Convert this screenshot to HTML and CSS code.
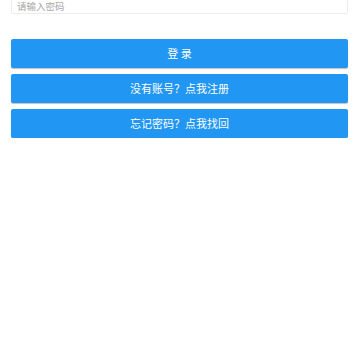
FILE: index.html
```html
<!DOCTYPE html>
<html lang="zh-CN">
<head>
    <meta charset="UTF-8">
    <meta name="viewport" content="width=device-width, initial-scale=1.0">
    <title>登录</title>
    <link rel="stylesheet" href="styles.css">
</head>
<body>
    <div class="login-form">
        <input class="field" type="password" placeholder="请输入密码">
        <div class="actions">
            <button class="btn">登 录</button>
            <button class="btn">没有账号？点我注册</button>
            <button class="btn">忘记密码？点我找回</button>
        </div>
    </div>
</body>
</html>
```
FILE: styles.css
```css
*, *::before, *::after {
	box-sizing: border-box;
}

body {
	margin: 0;
	background-color: #fff;
	font-family: "Noto Sans CJK SC", "Noto Sans", sans-serif;
}

.login-form {
	padding: 0 12px 0 11px;
}

.field {
	display: block;
	width: 100%;
	height: 20px;
	margin-top: -6px;
	padding: 4px 5px 0;
	border: 1px solid #ececec;
	border-radius: 2px;
	font-family: inherit;
	font-size: 9.5px;
	color: #333;
	outline: none;
}

.field::placeholder {
	color: #a9a9a9;
}

.actions {
	display: flex;
	flex-direction: column;
	gap: 6px;
	margin-top: 25px;
}

.btn {
	height: 29px;
	padding: 0 0 2px;
	border: none;
	border-radius: 2px;
	background-color: #2196f3;
	box-shadow: 0 1px 1px rgba(0, 0, 0, 0.25);
	color: #fff;
	font-family: inherit;
	font-size: 11px;
	cursor: pointer;
}
```
